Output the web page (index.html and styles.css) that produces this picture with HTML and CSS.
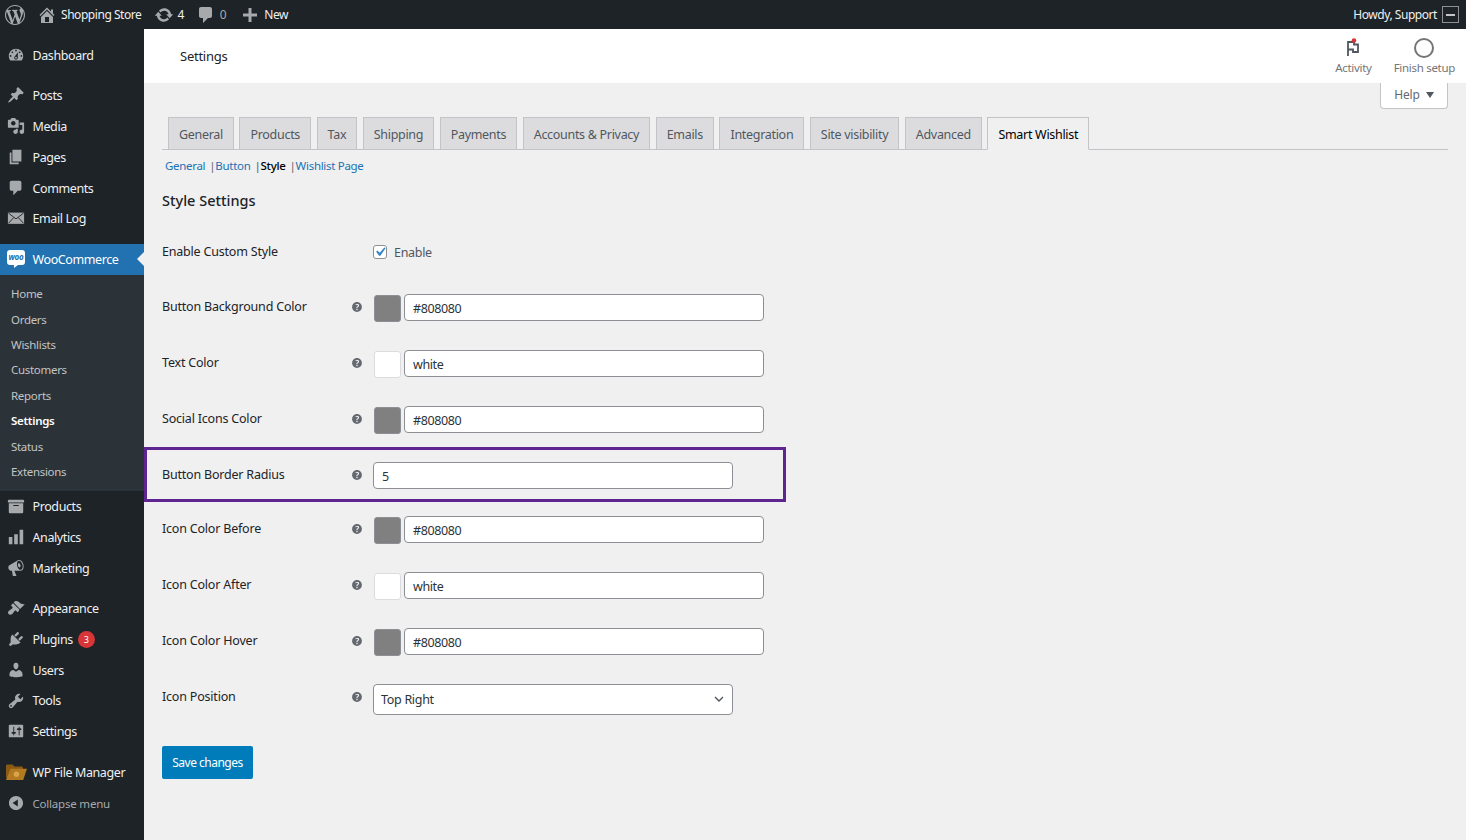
FILE: index.html
```html
<!DOCTYPE html>
<html lang="en">
<head>
    <meta charset="UTF-8">
    <title>Settings - Shopping Store</title>
    <link rel="stylesheet" href="styles.css">
</head>
<body>
    <svg class="sprite" width="0" height="0">
        <symbol id="i-wp" viewBox="0 0 20 20"><path d="M20 10c0-5.51-4.49-10-10-10C4.48 0 0 4.49 0 10c0 5.52 4.48 10 10 10 5.51 0 10-4.48 10-10zM7.78 15.37L4.37 6.22c.55-.02 1.17-.08 1.17-.08.5-.06.44-1.13-.06-1.11 0 0-1.45.11-2.37.11-.18 0-.37 0-.58-.01C4.12 2.69 6.87 1.11 10 1.11c2.33 0 4.45.87 6.05 2.34-.68-.11-1.65.39-1.65 1.58 0 .74.45 1.36.9 2.1.35.61.55 1.36.55 2.46 0 1.49-1.4 5-1.4 5l-3.03-8.37c.54-.02.82-.17.82-.17.5-.05.44-1.25-.06-1.22 0 0-1.44.12-2.38.12-.87 0-2.33-.12-2.33-.12-.5-.03-.56 1.2-.06 1.22l.92.08 1.26 3.41zM17.41 10c.24-.64.74-1.87.43-4.25.7 1.29 1.05 2.71 1.05 4.25 0 3.29-1.73 6.24-4.4 7.78.97-2.59 1.94-5.2 2.92-7.78zM6.1 18.09C3.12 16.65 1.11 13.53 1.11 10c0-1.3.23-2.48.72-3.59C3.25 10.3 4.67 14.2 6.1 18.09zm4.03-6.63l2.58 6.98c-.86.29-1.76.45-2.71.45-.79 0-1.57-.11-2.29-.33.81-2.38 1.62-4.74 2.42-7.1z"/></symbol>
        <symbol id="i-home" viewBox="0 0 20 20"><path d="M16 8.5l1.53 1.53-1.06 1.06L10 4.62l-6.47 6.47-1.06-1.06L10 2.5l4 4v-2h2v4zm-6-2.46l6 5.99V18H4v-5.97zM12 17v-5H8v5h4z"/></symbol>
        <symbol id="i-update" viewBox="0 0 20 20"><path d="M10.2 3.28c3.53 0 6.43 2.61 6.92 6h2.08l-3.5 4-3.5-4h2.32c-.45-1.97-2.21-3.45-4.32-3.45-1.45 0-2.73.71-3.54 1.78L4.95 5.66C6.23 4.2 8.11 3.28 10.2 3.28zm-.4 13.44c-3.52 0-6.43-2.61-6.92-6H.8l3.5-4c1.17 1.33 2.33 2.67 3.5 4H5.48c.45 1.97 2.21 3.45 4.32 3.45 1.45 0 2.73-.71 3.54-1.78l1.71 1.95c-1.28 1.46-3.15 2.38-5.25 2.38z"/></symbol>
        <symbol id="i-comment" viewBox="0 0 20 20"><path d="M5 2h9c1.1 0 2 .9 2 2v7c0 1.1-.9 2-2 2h-2l-5 5v-5H5c-1.1 0-2-.9-2-2V4c0-1.1.9-2 2-2z"/></symbol>
        <symbol id="i-plus" viewBox="0 0 20 20"><path d="M17 8.5v3h-5.5V17h-3v-5.500H3v-3h5.500V3h3v5.500z"/></symbol>
        <symbol id="i-dashboard" viewBox="0 0 20 20"><path d="M3.76 16h12.48c1.1-1.37 1.76-3.11 1.76-5 0-4.42-3.58-8-8-8s-8 3.58-8 8c0 1.89.66 3.63 1.76 5zM10 4c.55 0 1 .45 1 1s-.45 1-1 1-1-.45-1-1 .45-1 1-1zM6 6c.55 0 1 .45 1 1s-.45 1-1 1-1-.45-1-1 .45-1 1-1zm8 0c.55 0 1 .45 1 1s-.45 1-1 1-1-.45-1-1 .45-1 1-1zm-5.37 5.55L12 7v6c0 1.1-.9 2-2 2s-2-.9-2-2c0-.57.24-1.08.63-1.45zM4 10c.55 0 1 .45 1 1s-.45 1-1 1-1-.45-1-1 .45-1 1-1zm12 0c.55 0 1 .45 1 1s-.45 1-1 1-1-.45-1-1 .45-1 1-1zm-5 3c0-.55-.45-1-1-1s-1 .45-1 1 .45 1 1 1 1-.45 1-1z"/></symbol>
        <symbol id="i-pin" viewBox="0 0 20 20"><path d="M10.44 3.02l1.82-1.82 6.36 6.35-1.83 1.82c-1.05-.68-2.48-.57-3.41.36l-.75.75c-.92.93-1.04 2.35-.35 3.41l-1.83 1.82-2.41-2.41-2.8 2.79c-.42.42-3.38 2.71-3.8 2.29s1.86-3.39 2.28-3.81l2.79-2.79L4.1 9.36l1.83-1.82c1.05.69 2.48.57 3.4-.36l.75-.75c.93-.92 1.05-2.35.36-3.41z"/></symbol>
        <symbol id="i-media" viewBox="0 0 20 20"><path d="M13 11V4c0-.55-.45-1-1-1h-1.670L9 1H5L3.670 3H2c-.55 0-1 .45-1 1v7c0 .55.45 1 1 1h10c.55 0 1-.45 1-1zM7 4.500c1.380 0 2.500 1.120 2.500 2.500S8.380 9.500 7 9.500 4.500 8.380 4.500 7 5.620 4.500 7 4.500zM14 6h5v10.500c0 1.380-1.120 2.500-2.500 2.500S14 17.880 14 16.500s1.120-2.500 2.500-2.500c.17 0 .34.02.5.05V9h-3V6zm-4 8.050V13h2v3.500c0 1.380-1.120 2.500-2.500 2.500S7 17.880 7 16.500 8.120 14 9.500 14c.17 0 .34.02.5.05z"/></symbol>
        <symbol id="i-pages" viewBox="0 0 20 20"><path d="M6 15V2h10v13H6zm-1 1h8v2H3V5h2v11z"/></symbol>
        <symbol id="i-mail" viewBox="0 0 20 20"><rect x="1" y="4" width="18" height="12.500"/><path d="M1.500 4.500L10 11l8.500-6.500M1.500 16l6-6.500M18.500 16l-6-6.500" fill="none" stroke="#1d2327" stroke-width="1"/></symbol>
        <symbol id="i-box" viewBox="0 0 20 20"><path d="M19 4v2H1V4c0-.55.45-1 1-1h16c.55 0 1 .45 1 1zM2 7h16v10c0 .55-.45 1-1 1H3c-.55 0-1-.45-1-1V7zm11 3V9H7v1h6z"/></symbol>
        <symbol id="i-bars" viewBox="0 0 20 20"><path d="M18 18V2h-4v16h4zm-6 0V7H8v11h4zm-6 0v-8H2v8h4z"/></symbol>
        <symbol id="i-megaphone" viewBox="0 0 20 20"><path d="M18.150 5.940c.46 1.620.38 3.220-.02 4.480-.42 1.280-1.260 2.180-2.300 2.480-.16.06-.26.06-.4.06-.06.02-.12.02-.18.02-.06.02-.14.02-.22.02H8.230l2.220 5.500c.02.14-.06.26-.14.34-.08.1-.24.16-.34.16H6.950c-.1 0-.26-.06-.34-.16-.08-.08-.16-.2-.14-.34l-1-5.500H4.250l-.02-.02c-.5.06-1.080-.18-1.540-.62s-.88-1.080-1.060-1.880c-.24-.8-.2-1.560-.02-2.200.18-.62.58-1.080 1.060-1.300l.02-.02 9-5.400c.1-.06.18-.1.24-.16.06-.04.14-.08.24-.12.16-.08.28-.12.5-.18 1.040-.3 2.240.1 3.220.98s1.840 2.240 2.260 3.860zm-2.580 5.980h-.02c.4-.1.74-.34 1.040-.7.58-.7.860-1.760.860-3.040-.02-.64-.1-1.300-.28-1.980-.34-1.360-1.020-2.500-1.780-3.240s-1.680-1.100-2.460-.88c-.82.22-1.400.96-1.700 2-.32 1.040-.28 2.360.06 3.720.38 1.360 1 2.500 1.800 3.240.78.74 1.620 1.100 2.480.88zm-2.540-7.080c.22-.04.42-.02.62.04.38.16.76.48 1.020 1s.42 1.200.42 1.780c0 .3-.04.56-.12.8-.18.48-.44.84-.86.94-.34.1-.8-.06-1.140-.4s-.56-.86-.72-1.400c-.22-.8-.22-1.640-.06-2.200.14-.28.42-.5.84-.56z"/></symbol>
        <symbol id="i-brush" viewBox="0 0 20 20"><path d="M14.480 11.060L7.410 3.990l1.500-1.500c.5-.56 2.300-.47 3.510.32 1.210.8 1.430 1.280 2.910 2.100 1.180.64 2.450 1.260 4.450.85zm-.71.71L6.700 4.700 4.930 6.470c-.39.39-.39 1.020 0 1.410l1.060 1.060c.39.39.39 1.030 0 1.420-.6.6-1.430 1.110-2.210 1.690-.35.26-.7.53-1.010.84C1.430 13.230.64 15.200 1.500 16.500c1.120 1.680 3.260 1.210 4.640-.17.3-.31.58-.66.84-1.010.58-.78 1.090-1.610 1.690-2.210.39-.39 1.020-.39 1.410 0l1.060 1.060c.39.39 1.020.39 1.410 0z"/></symbol>
        <symbol id="i-plug" viewBox="0 0 20 20"><path d="M13.110 4.360L9.870 7.600 8 5.730l3.240-3.240c.35-.34 1.050-.2 1.560.32.52.51.66 1.210.31 1.550zm-8 1.770l.91-1.120 9.010 9.010-1.190.84c-.71.71-2.630 1.160-3.820 1.160H6.140L4.900 17.260c-.59.59-1.540.59-2.120 0-.59-.58-.59-1.530 0-2.120l1.240-1.240v-3.880c0-1.130.4-3.190 1.090-3.890zm7.260 3.970l3.240-3.240c.34-.35 1.040-.21 1.550.31.52.51.66 1.210.31 1.550l-3.240 3.250z"/></symbol>
        <symbol id="i-user" viewBox="0 0 20 20"><path d="M10 9.250c-2.270 0-2.730-3.440-2.730-3.440C7 4.020 7.820 2 9.970 2c2.160 0 2.980 2.020 2.710 3.810 0 0-.41 3.440-2.680 3.440zm0 2.570L12.720 10c2.390 0 4.520 2.330 4.520 4.530v2.490s-3.650 1.130-7.240 1.130c-3.650 0-7.240-1.130-7.240-1.130v-2.490c0-2.250 1.940-4.480 4.470-4.480z"/></symbol>
        <symbol id="i-wrench" viewBox="0 0 20 20"><path d="M16.680 9.770c-1.340 1.340-3.300 1.670-4.950.99l-5.410 6.520c-.99.99-2.590.99-3.580 0s-.99-2.590 0-3.570l6.520-5.420c-.68-1.650-.35-3.610.99-4.950 1.280-1.280 3.120-1.620 4.720-1.060l-2.890 2.890 2.820 2.820 2.860-2.870c.53 1.580.18 3.390-1.080 4.650zM3.810 16.210c.4.39 1.040.39 1.430 0 .4-.4.4-1.040 0-1.430-.39-.4-1.030-.4-1.430 0-.39.39-.39 1.030 0 1.430z"/></symbol>
        <symbol id="i-sliders" viewBox="0 0 20 20"><path d="M18 16V4c0-.55-.45-1-1-1H3c-.55 0-1 .45-1 1v12c0 .55.45 1 1 1h14c.55 0 1-.45 1-1zM8 11h1c.55 0 1 .45 1 1s-.45 1-1 1H8v1.500c0 .28-.22.5-.5.5s-.5-.22-.5-.5V13H6c-.55 0-1-.45-1-1s.45-1 1-1h1V5.500c0-.28.22-.5.5-.5s.5.22.5.5V11zm5-2h-1c-.55 0-1-.45-1-1s.45-1 1-1h1V5.500c0-.28.22-.5.5-.5s.5.22.5.5V7h1c.55 0 1 .45 1 1s-.45 1-1 1h-1v5.500c0 .28-.22.5-.5.5s-.5-.22-.5-.5V9z"/></symbol>
        <symbol id="i-collapse" viewBox="0 0 20 20"><path d="M10 2.160c4.330 0 7.840 3.510 7.840 7.840s-3.510 7.840-7.840 7.840S2.160 14.330 2.160 10 5.710 2.160 10 2.160zm2 11.720V6.120L6.180 9.970z"/></symbol>
        <symbol id="i-help" viewBox="0 0 20 20"><path d="M17 10c0-3.870-3.140-7-7-7-3.870 0-7 3.130-7 7 0 3.860 3.130 7 7 7 3.860 0 7-3.140 7-7zm-6.300 1.480H9.140v-.43c0-.38.08-.7.24-.98s.46-.57.88-.89c.41-.29.68-.53.81-.71.14-.18.2-.39.2-.62 0-.25-.09-.44-.28-.58-.19-.13-.45-.19-.79-.19-.58 0-1.250.19-2 .57l-.64-1.280c.87-.49 1.800-.74 2.770-.74.81 0 1.450.2 1.920.58.48.39.71.91.71 1.550 0 .43-.09.8-.29 1.110-.19.32-.57.67-1.110 1.060-.38.28-.61.49-.71.63-.1.15-.15.34-.15.57v.35zm-1.470 2.740c-.18-.17-.27-.42-.27-.73 0-.33.08-.58.26-.75s.43-.25.77-.25c.32 0 .57.09.75.26s.27.42.27.74c0 .3-.09.55-.27.72-.18.18-.43.27-.75.27-.33 0-.58-.09-.76-.26z"/></symbol>
    </svg>

    <header class="adminbar">
        <svg class="bar-icon wp-logo"><use href="#i-wp"/></svg>
        <span class="bar-item"><svg class="bar-icon"><use href="#i-home"/></svg>Shopping Store</span>
        <span class="bar-item updates"><svg class="bar-icon"><use href="#i-update"/></svg>4</span>
        <span class="bar-item muted"><svg class="bar-icon"><use href="#i-comment"/></svg>0</span>
        <span class="bar-item"><svg class="bar-icon"><use href="#i-plus"/></svg>New</span>
        <span class="bar-howdy">Howdy, Support<span class="avatar"><span class="avatar-mark"></span></span></span>
    </header>

    <div class="wrap">
        <nav class="sidebar">
            <ul class="menu">
                <li><svg class="menu-icon"><use href="#i-dashboard"/></svg>Dashboard</li>
            </ul>
            <ul class="menu">
                <li><svg class="menu-icon"><use href="#i-pin"/></svg>Posts</li>
                <li><svg class="menu-icon"><use href="#i-media"/></svg>Media</li>
                <li><svg class="menu-icon"><use href="#i-pages"/></svg>Pages</li>
                <li><svg class="menu-icon"><use href="#i-comment"/></svg>Comments</li>
                <li><svg class="menu-icon"><use href="#i-mail"/></svg>Email Log</li>
            </ul>
            <ul class="menu menu-woo">
                <li class="current">
                    <span class="woo-icon">woo</span>WooCommerce
                </li>
            </ul>
            <ul class="submenu">
                <li>Home</li>
                <li>Orders</li>
                <li>Wishlists</li>
                <li>Customers</li>
                <li>Reports</li>
                <li class="active">Settings</li>
                <li>Status</li>
                <li>Extensions</li>
            </ul>
            <ul class="menu">
                <li><svg class="menu-icon"><use href="#i-box"/></svg>Products</li>
                <li><svg class="menu-icon"><use href="#i-bars"/></svg>Analytics</li>
                <li><svg class="menu-icon"><use href="#i-megaphone"/></svg>Marketing</li>
            </ul>
            <ul class="menu">
                <li><svg class="menu-icon"><use href="#i-brush"/></svg>Appearance</li>
                <li><svg class="menu-icon"><use href="#i-plug"/></svg>Plugins<span class="badge">3</span></li>
                <li><svg class="menu-icon"><use href="#i-user"/></svg>Users</li>
                <li><svg class="menu-icon"><use href="#i-wrench"/></svg>Tools</li>
                <li><svg class="menu-icon"><use href="#i-sliders"/></svg>Settings</li>
            </ul>
            <ul class="menu menu-files">
                <li>
                    <svg class="folder-icon" viewBox="0 0 21 17"><path fill="#8a5a14" d="M0 2c0-1 .6-1.600 1.500-1.600h5L8.500 2.500h7c.9 0 1.500.6 1.500 1.500v10H1.500C.6 14 0 13.400 0 12.500z"/><path fill="#b47a22" d="M4.500 4.800H21l-3.800 11.200H0z"/><circle cx="10.500" cy="10.300" r="2.700" fill="#d9a548"/></svg>
                    WP File Manager
                </li>
                <li class="collapse"><svg class="menu-icon"><use href="#i-collapse"/></svg>Collapse menu</li>
            </ul>
        </nav>

        <div class="page">
            <div class="topbar">
                <h1>Settings</h1>
                <div class="top-actions">
                    <div class="top-action">
                        <svg class="activity-icon" viewBox="0 0 20 20">
                            <path d="M5 18V4h6v2.500h4v7.500h-5v-2.500H5" fill="none" stroke="#50575e" stroke-width="1.800"/>
                            <circle cx="11" cy="2.500" r="2.300" fill="#d63638"/>
                        </svg>
                        <span>Activity</span>
                    </div>
                    <div class="top-action">
                        <span class="setup-ring"></span>
                        <span>Finish setup</span>
                    </div>
                </div>
            </div>

            <div class="content">
                <div class="help-row"><span class="help-tab">Help<i class="caret"></i></span></div>

                <div class="tabs">
                    <a>General</a>
                    <a>Products</a>
                    <a>Tax</a>
                    <a>Shipping</a>
                    <a>Payments</a>
                    <a>Accounts &amp; Privacy</a>
                    <a>Emails</a>
                    <a>Integration</a>
                    <a>Site visibility</a>
                    <a>Advanced</a>
                    <a class="active">Smart Wishlist</a>
                </div>

                <ul class="subnav">
                    <li><a>General</a></li>
                    <li><a>Button</a></li>
                    <li class="current">Style</li>
                    <li><a>Wishlist Page</a></li>
                </ul>

                <h2>Style Settings</h2>

                <div class="form">
                    <div class="row row-check">
                        <div class="label">Enable Custom Style</div>
                        <div class="control">
                            <span class="checkbox"><svg viewBox="0 0 20 20"><path d="M14.830 4.890l1.340.94-5.810 8.380H9.020L5.780 9.670l1.340-1.250 2.570 2.400z"/></svg></span>
                            <span class="check-label">Enable</span>
                        </div>
                    </div>
                    <div class="row">
                        <div class="label">Button Background Color</div>
                        <svg class="help"><use href="#i-help"/></svg>
                        <div class="control"><span class="swatch grey"></span><span class="input">#808080</span></div>
                    </div>
                    <div class="row">
                        <div class="label">Text Color</div>
                        <svg class="help"><use href="#i-help"/></svg>
                        <div class="control"><span class="swatch"></span><span class="input">white</span></div>
                    </div>
                    <div class="row">
                        <div class="label">Social Icons Color</div>
                        <svg class="help"><use href="#i-help"/></svg>
                        <div class="control"><span class="swatch grey"></span><span class="input">#808080</span></div>
                    </div>
                    <div class="row row-marked">
                        <div class="label">Button Border Radius</div>
                        <svg class="help"><use href="#i-help"/></svg>
                        <div class="control"><span class="input">5</span></div>
                    </div>
                    <div class="row">
                        <div class="label">Icon Color Before</div>
                        <svg class="help"><use href="#i-help"/></svg>
                        <div class="control"><span class="swatch grey"></span><span class="input">#808080</span></div>
                    </div>
                    <div class="row">
                        <div class="label">Icon Color After</div>
                        <svg class="help"><use href="#i-help"/></svg>
                        <div class="control"><span class="swatch"></span><span class="input">white</span></div>
                    </div>
                    <div class="row">
                        <div class="label">Icon Color Hover</div>
                        <svg class="help"><use href="#i-help"/></svg>
                        <div class="control"><span class="swatch grey"></span><span class="input">#808080</span></div>
                    </div>
                    <div class="row row-select">
                        <div class="label">Icon Position</div>
                        <svg class="help"><use href="#i-help"/></svg>
                        <div class="control">
                            <span class="select">Top Right<svg viewBox="0 0 10 6"><path d="M1 1l4 4 4-4" fill="none" stroke="#50575e" stroke-width="1.400"/></svg></span>
                        </div>
                    </div>
                </div>

                <button class="btn-save">Save changes</button>
            </div>
        </div>
    </div>
</body>
</html>
```

FILE: styles.css
```css
* {
    box-sizing: border-box;
}
html, body {
    height: 100%;
}
body {
    margin: 0;
    height: 840px;
    overflow: hidden;
    font-family: "Noto Sans", "Open Sans", sans-serif;
    font-size: 13px;
    color: #3c434a;
    background: #f0f0f1;
}
ul {
    list-style: none;
    margin: 0;
    padding: 0;
}
.sprite {
    position: absolute;
}

/* top admin bar */
.adminbar {
    height: 29px;
    background: #1d2327;
    color: #f0f0f1;
    display: flex;
    align-items: center;
    padding: 0 7px 0 5px;
    font-size: 12px;
    letter-spacing: -0.45px;
}
.bar-icon {
    width: 20px;
    height: 20px;
    fill: #a7aaad;
    flex: none;
}
.wp-logo {
    margin-right: 12px;
}
.bar-item {
    display: flex;
    align-items: center;
    gap: 4px;
    margin-right: 13px;
}
.bar-item.updates {
    gap: 3px;
    margin-right: 12px;
}
.bar-item.muted {
    color: #a7aaad;
    margin-right: 14px;
}
.bar-howdy {
    margin-left: auto;
    display: flex;
    align-items: center;
    gap: 5px;
}
.avatar {
    width: 17px;
    height: 17px;
    border: 1px solid #8c8f94;
    background: #1d2327;
    display: flex;
    align-items: center;
    justify-content: center;
}
.avatar-mark {
    width: 9px;
    height: 2px;
    background: #c3c4c7;
}

.wrap {
    display: flex;
    height: 811px;
}

/* left menu */
.sidebar {
    width: 144px;
    flex: none;
    background: #1d2327;
    color: #f0f0f1;
    padding-top: 11px;
    font-size: 12.500px;
    letter-spacing: -0.4px;
}
.menu {
    margin-bottom: 9.500px;
}
.menu li {
    height: 30.800px;
    display: flex;
    align-items: center;
    padding-left: 32.500px;
    position: relative;
}
.menu-icon {
    position: absolute;
    left: 7px;
    top: 6px;
    width: 18px;
    height: 18px;
    fill: #a7aaad;
}
.menu-woo {
    margin-top: 10px;
    margin-bottom: 0;
}
.menu li.current {
    background: #2271b1;
    color: #fff;
    height: 31px;
}
.menu li.current::after {
    content: "";
    position: absolute;
    right: 0;
    top: 8px;
    border: 7.500px solid transparent;
    border-right-color: #f0f0f1;
    border-left: 0;
}
.woo-icon {
    position: absolute;
    left: 7px;
    top: 6px;
    width: 18px;
    height: 15px;
    background: #fff;
    border-radius: 3px;
    color: #2271b1;
    font-size: 8px;
    font-weight: 700;
    font-style: italic;
    line-height: 14px;
    text-align: center;
    letter-spacing: -0.2px;
}
.woo-icon::after {
    content: "";
    position: absolute;
    left: 7px;
    bottom: -3px;
    border-top: 3px solid #fff;
    border-right: 4px solid transparent;
}
.submenu {
    background: #2c3338;
    padding: 6px 0 6px;
    height: 216px;
    color: #c3c4c7;
    font-size: 11.500px;
    letter-spacing: -0.3px;
}
.submenu li {
    height: 25.400px;
    line-height: 25.400px;
    padding-left: 11px;
}
.submenu li.active {
    color: #fff;
    font-weight: 600;
}
.badge {
    width: 17px;
    height: 17px;
    border-radius: 50%;
    background: #d63638;
    color: #fff;
    font-size: 9px;
    line-height: 17px;
    text-align: center;
    margin-left: 5px;
    letter-spacing: 0;
}
.folder-icon {
    position: absolute;
    left: 6px;
    top: 7px;
    width: 21px;
    height: 17px;
}
.menu-files {
    margin-top: 10px;
}
.menu li.collapse {
    color: #a7aaad;
    font-size: 11.500px;
    letter-spacing: -0.2px;
}

/* white title strip */
.page {
    flex: 1;
    min-width: 0;
}
.topbar {
    height: 54px;
    background: #fff;
    display: flex;
    align-items: center;
    justify-content: space-between;
    padding: 0 11px 0 36px;
}
.topbar h1 {
    margin: 0;
    font-size: 13px;
    font-weight: 400;
    color: #1d2327;
    letter-spacing: -0.25px;
}
.top-actions {
    display: flex;
    gap: 22px;
    padding-top: 1px;
    color: #757575;
    font-size: 11.500px;
    letter-spacing: -0.3px;
}
.top-action {
    display: flex;
    flex-direction: column;
    align-items: center;
    gap: 2px;
}
.activity-icon {
    width: 20px;
    height: 20px;
}
.setup-ring {
    width: 20px;
    height: 20px;
    border: 2px solid #757575;
    border-radius: 50%;
}

/* settings area */
.content {
    padding: 0 18px;
}
.help-row {
    height: 34px;
    display: flex;
    justify-content: flex-end;
}
.help-tab {
    width: 68px;
    height: 26px;
    padding-bottom: 2px;
    background: #fff;
    border: 1px solid #c3c4c7;
    border-top: 0;
    border-radius: 0 0 4px 4px;
    color: #646970;
    display: flex;
    align-items: center;
    justify-content: center;
    gap: 6px;
    font-size: 12px;
    letter-spacing: -0.2px;
}
.caret {
    border: 4px solid transparent;
    border-top: 6px solid #50575e;
    border-bottom: 0;
}
.tabs {
    display: flex;
    height: 33px;
    padding-left: 6px;
    border-bottom: 1px solid #c3c4c7;
    font-size: 12.500px;
    letter-spacing: -0.3px;
}
.tabs a {
    height: 33px;
    padding: 0 10px;
    margin-right: 5.500px;
    line-height: 33px;
    background: #dcdcde;
    border: 1px solid #c3c4c7;
    color: #50575e;
}
.tabs a.active {
    background: #f0f0f1;
    border-bottom-color: #f0f0f1;
    color: #000;
}
.subnav {
    display: flex;
    padding: 8px 0 0 3px;
    height: 34px;
    font-size: 11.500px;
    color: #000;
    letter-spacing: -0.3px;
}
.subnav li + li {
    margin-left: 4px;
}
.subnav li + li::before {
    content: "|";
    color: #646970;
}
.subnav a {
    color: #2271b1;
}
.subnav .current {
    font-weight: 500;
}
h2 {
    margin: 5px 0 0;
    height: 39px;
    font-size: 14.500px;
    font-weight: 500;
    line-height: 22px;
    color: #1d2327;
}

/* form rows */
.row {
    display: flex;
    align-items: center;
    height: 56px;
    position: relative;
}
.label {
    width: 188px;
    flex: none;
    color: #1d2327;
    font-size: 12.500px;
    letter-spacing: -0.2px;
    margin-top: -2px;
}
.help {
    width: 14px;
    height: 14px;
    fill: #646970;
    flex: none;
    margin-right: 9px;
}
.control {
    display: flex;
    align-items: center;
    gap: 3px;
    color: #2c3338;
    font-size: 12.500px;
    letter-spacing: -0.4px;
}
.row-check {
    height: 51px;
    padding-bottom: 3px;
}
.row-check .label {
    width: 211px;
}
.checkbox {
    width: 14px;
    height: 14px;
    margin-right: 4px;
    background: #fff;
    border: 1px solid #8c8f94;
    border-radius: 3px;
    display: block;
}
.checkbox svg {
    display: block;
    width: 18px;
    height: 18px;
    margin: -3px;
    fill: #3582c4;
}
.check-label {
    color: #50575e;
    letter-spacing: -0.3px;
}
.swatch {
    width: 27px;
    height: 27px;
    margin: 2px 0 0 1px;
    background: #fff;
    border: 1px solid #dcdcde;
    border-radius: 3px;
}
.swatch.grey {
    background: #808080;
    border-color: #8c8f94;
}
.input {
    width: 360px;
    height: 27px;
    padding: 0 8px;
    line-height: 27px;
    background: #fff;
    border: 1px solid #8c8f94;
    border-radius: 4px;
}
.row-marked {
    height: 54px;
    margin: 0 -4px 0 -18px;
    padding: 2px 0 0 18px;
    width: 642px;
}
.row-marked::after {
    content: "";
    position: absolute;
    inset: 0 0 -1px;
    border: 3px solid #5e2590;
    pointer-events: none;
}
.select {
    width: 360px;
    height: 31px;
    padding: 0 8px 0 7px;
    background: #fff;
    border: 1px solid #8c8f94;
    border-radius: 4px;
    display: flex;
    align-items: center;
    justify-content: space-between;
    letter-spacing: -0.3px;
}
.select svg {
    width: 10px;
    height: 6px;
}
.row-select .control {
    position: relative;
    top: 2px;
}
.btn-save {
    display: block;
    margin-top: 21px;
    width: 91px;
    height: 33px;
    padding: 0;
    background: #007cba;
    color: #fff;
    border: 0;
    border-radius: 2px;
    font-family: inherit;
    font-size: 12px;
    letter-spacing: -0.5px;
}
```
